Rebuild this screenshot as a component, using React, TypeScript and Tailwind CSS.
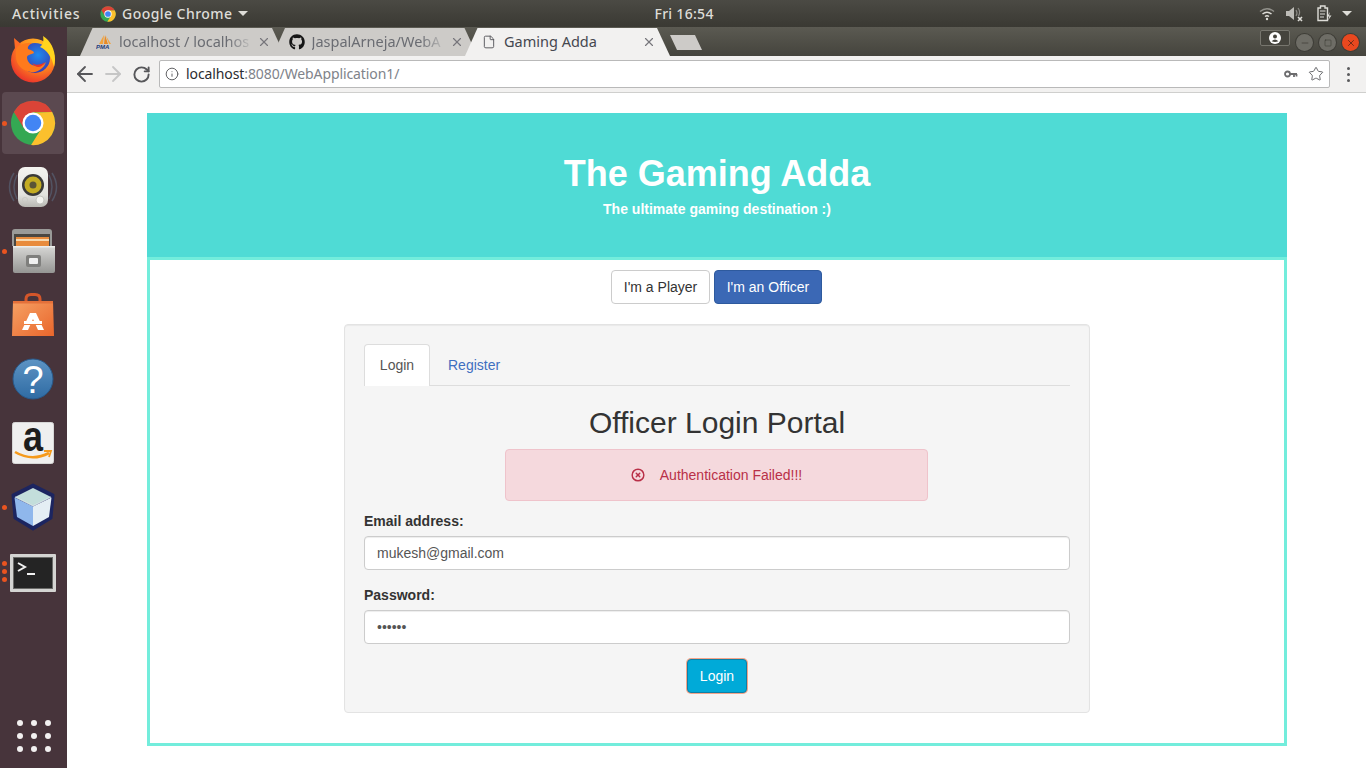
import { ArrowLeft, ArrowRight, RotateCw, Info, Star, X, File, CircleX, Minus, Square } from 'lucide-react';
import { FaGithub } from 'react-icons/fa';
import type { ReactNode } from 'react';

function ChromeIcon({ size }: { size: number }) {
  return (
    <svg width={size} height={size} viewBox="0 0 48 48">
      <circle cx="24" cy="24" r="23" fill="#34A853" />
      <path d="M44 12.5A23 23 0 0 1 22 47L33 29.5L24 13Z" fill="#FBC02D" />
      <path d="M4 12.5A23 23 0 0 1 44 12.5H24L14.5 29.5Z" fill="#DB4437" />
      <circle cx="24" cy="24" r="11" fill="#fff" />
      <circle cx="24" cy="24" r="8.6" fill="#4285F4" />
    </svg>
  );
}

function FirefoxIcon() {
  return (
    <svg width="46" height="48" viewBox="0 0 46 48">
      <defs>
        <radialGradient id="ffo" cx="0.65" cy="0.25" r="0.85">
          <stop offset="0" stopColor="#FFC928" />
          <stop offset="0.5" stopColor="#FF8A1E" />
          <stop offset="1" stopColor="#E8262D" />
        </radialGradient>
        <radialGradient id="ffb" cx="0.6" cy="0.4" r="0.7">
          <stop offset="0" stopColor="#1F8BEF" />
          <stop offset="1" stopColor="#3B2EA8" />
        </radialGradient>
      </defs>
      <circle cx="23" cy="25.5" r="22" fill="url(#ffo)" />
      <path d="M4 3L11 9L5 14Z" fill="#FF6A24" />
      <circle cx="25" cy="23" r="15" fill="url(#ffb)" />
      <path d="M33 1C43 7 47 20 44 32C42 22 37 15 30 12C33 10 34 6 33 1Z" fill="#FFD51E" />
      <path d="M6 14C10 9 16 7 22 8C19 10 17 12 18 14C21 15 24 16 24 18C21 20 18 19 17 22C17 27 21 31 27 31C32 31 34 29 36 27C34 33 28 38 21 37C12 36 6 29 6 22Z" fill="#FF7A1C" />
      <path d="M22 28C26 31 31 30 35 27C32 33 26 34 22 28Z" fill="#E8352B" />
    </svg>
  );
}

function SpeakerIcon() {
  return (
    <svg width="50" height="48" viewBox="0 0 50 48">
      <defs>
        <linearGradient id="spk" x1="0" y1="0" x2="0" y2="1">
          <stop offset="0" stopColor="#F4F4F0" />
          <stop offset="0.7" stopColor="#E2E2DE" />
          <stop offset="1" stopColor="#B8B8B2" />
        </linearGradient>
      </defs>
      <g fill="none" stroke="#6C9BBE" strokeWidth="1.5" opacity="0.3">
        <path d="M6 10Q-3 24 6 38" />
        <path d="M9 12Q3 24 9 36" />
        <path d="M44 10Q53 24 44 38" />
        <path d="M41 12Q47 24 41 36" />
      </g>
      <rect x="10" y="4" width="30" height="40" rx="7" fill="url(#spk)" />
      <circle cx="25" cy="22" r="11" fill="#3A3A38" />
      <circle cx="25" cy="22" r="8.5" fill="#C4AC22" />
      <circle cx="25" cy="22" r="3.5" fill="#5A5436" />
      <circle cx="32" cy="37" r="4" fill="#F4F4F0" stroke="#BDBDB8" strokeWidth="0.8" />
      <circle cx="17" cy="37" r="2.6" fill="none" stroke="#C8C8C2" strokeWidth="0.8" />
    </svg>
  );
}

function FilesIcon() {
  return (
    <svg width="46" height="46" viewBox="0 0 46 46">
      <defs>
        <linearGradient id="fil" x1="0" y1="0" x2="0" y2="1">
          <stop offset="0" stopColor="#D8D8D6" />
          <stop offset="1" stopColor="#959593" />
        </linearGradient>
      </defs>
      <path d="M2 4Q2 1 5 1H39Q42 1 42 4V18H2Z" fill="#9A9A98" />
      <rect x="4" y="6" width="36" height="12" fill="#4A4742" />
      <rect x="6" y="9" width="33" height="9" fill="#E88B3C" />
      <rect x="6" y="11" width="33" height="2" fill="#F7D9B0" />
      <path d="M3 18H45V43Q45 45 43 45H5Q3 45 3 43Z" fill="url(#fil)" />
      <rect x="3" y="18" width="42" height="1.5" fill="#EDEDEB" />
      <rect x="16" y="27" width="15" height="12" rx="2" fill="#7F7F7D" />
      <rect x="19" y="30" width="9" height="6" rx="1" fill="#F0F0F0" />
    </svg>
  );
}

function BagIcon() {
  return (
    <svg width="44" height="44" viewBox="0 0 44 44">
      <defs>
        <linearGradient id="bag" x1="0" y1="0" x2="1" y2="1">
          <stop offset="0" stopColor="#F6A265" />
          <stop offset="1" stopColor="#E9662C" />
        </linearGradient>
      </defs>
      <path d="M15 12V6Q15 1.5 20 1.5H24Q29 1.5 29 6V12" fill="none" stroke="#D4562A" strokeWidth="3" />
      <path d="M2 8H42L43 43H1Z" fill="url(#bag)" />
      <rect x="2" y="8" width="40" height="2.5" fill="#E4703A" />
      <path d="M19 20H25L33 37H27L22 26L17 37H11Z" fill="#fff" />
      <rect x="13" y="28" width="18" height="3" fill="#fff" />
      <rect x="13" y="31" width="18" height="1" fill="#EE7D3C" />
    </svg>
  );
}

function HelpIcon() {
  return (
    <svg width="42" height="42" viewBox="0 0 42 42">
      <defs>
        <linearGradient id="hlp" x1="0" y1="0" x2="0" y2="1">
          <stop offset="0" stopColor="#5D94C4" />
          <stop offset="1" stopColor="#2F6BA3" />
        </linearGradient>
      </defs>
      <circle cx="21" cy="21" r="20" fill="url(#hlp)" stroke="#28598A" />
      <text x="21" y="35" textAnchor="middle" fontFamily="Liberation Sans" fontSize="38" fill="#fff">?</text>
    </svg>
  );
}

function AmazonIcon() {
  return (
    <svg width="42" height="42" viewBox="0 0 42 42" className="overflow-visible">
      <rect x="0.5" y="0.5" width="41" height="41" rx="2" fill="#EFEFEF" stroke="#D6D6D6" />
      <text transform="translate(21 29) scale(1 1.2)" textAnchor="middle" fontFamily="Liberation Sans" fontWeight="700" fontSize="36" fill="#1d1d1d">a</text>
      <path d="M3 30Q20 40 37 31" fill="none" stroke="#F59A1C" strokeWidth="2.6" />
      <path d="M32 29L39 29L37 35" fill="none" stroke="#F59A1C" strokeWidth="1.8" />
    </svg>
  );
}

function CubeIcon() {
  return (
    <svg width="48" height="48" viewBox="0 0 48 48">
      <path d="M24 2L44 12L42 35L24 46L6 35L4 12Z" fill="#1C2560" stroke="#1C2560" strokeWidth="3" strokeLinejoin="round" />
      <path d="M24 5L42 14L24 23L6 14Z" fill="#C3DEDB" />
      <path d="M5.5 14.5L24 23.5V43L8 34Z" fill="#8FB7EC" />
      <path d="M42.5 14.5L24 23.5V43L40 34Z" fill="#E4EEF4" />
      <path d="M6 14L24 23L42 14" fill="none" stroke="#F4FAFA" strokeWidth="0.8" />
    </svg>
  );
}

function TerminalIcon() {
  return (
    <svg width="46" height="38" viewBox="0 0 46 38" className="mt-[3px]">
      <rect x="0" y="0" width="46" height="38" rx="1" fill="#D4D4D2" />
      <rect x="3" y="3" width="40" height="32" fill="#6A6A68" />
      <rect x="4" y="4" width="38" height="30" fill="#242424" />
      <path d="M8 9L15 13L8 17" fill="none" stroke="#f2f2f2" strokeWidth="2" />
      <rect x="17" y="19" width="8" height="2" fill="#f2f2f2" />
    </svg>
  );
}

function DockItem({ dots = 0, active = false, children }: { dots?: number; active?: boolean; children: ReactNode }) {
  return (
    <div className="relative h-[64px] w-[67px] shrink-0 py-[1px] pl-[2px] pr-[3px]">
      {dots > 0 && (
        <div className="absolute left-[2px] top-0 flex h-full flex-col justify-center gap-[3px]">
          {Array.from({ length: dots }).map((_, i) => (
            <span key={i} className="h-[5px] w-[5px] rounded-full bg-[#E95420]" />
          ))}
        </div>
      )}
      <div className={`flex h-[62px] w-[62px] items-center justify-center ${active ? 'rounded-[4px] bg-[#5B4950]' : ''}`}>
        {children}
      </div>
    </div>
  );
}

function Dock() {
  return (
    <aside className="flex w-[67px] shrink-0 flex-col items-center bg-[#47343B]">
      <DockItem><FirefoxIcon /></DockItem>
      <DockItem active dots={1}><ChromeIcon size={46} /></DockItem>
      <DockItem><SpeakerIcon /></DockItem>
      <DockItem dots={1}><FilesIcon /></DockItem>
      <DockItem><BagIcon /></DockItem>
      <DockItem><HelpIcon /></DockItem>
      <DockItem><AmazonIcon /></DockItem>
      <DockItem dots={1}><CubeIcon /></DockItem>
      <DockItem dots={3}><TerminalIcon /></DockItem>
      <div className="mt-auto mb-[16px] grid grid-cols-3 gap-x-[8px] gap-y-[7px]">
        {Array.from({ length: 9 }).map((_, i) => (
          <span key={i} className="h-[6px] w-[6px] rounded-full bg-[#F2F0F0]" />
        ))}
      </div>
    </aside>
  );
}

function TopBar() {
  return (
    <header className="flex h-[27px] shrink-0 items-center bg-gradient-to-b from-[#4B4A44] to-[#3A3933] pl-[12px] pr-[14px] font-['Noto_Sans',sans-serif] text-[14px] font-medium text-[#DEDDD8]">
      <span className="w-[88px] tracking-[0.8px]">Activities</span>
      <ChromeIcon size={16} />
      <span className="ml-[6px] tracking-[0.45px]">Google Chrome</span>
      <span className="ml-[6px] h-0 w-0 border-x-[5px] border-t-[5px] border-x-transparent border-t-[#DEDDD8]" />
      <span className="ml-[406px] tracking-[0.3px]">Fri 16:54</span>
      <div className="ml-auto flex items-center">
        <svg width="16" height="14" viewBox="0 0 16 14" fill="none" stroke="#DEDDD8" strokeWidth="1.5">
          <path d="M1 4.5Q8 -1 15 4.5" opacity="0.5" />
          <path d="M3.5 7Q8 3.5 12.5 7" />
          <path d="M6 9.5Q8 8 10 9.5" />
          <circle cx="8" cy="12" r="1.2" fill="#DEDDD8" stroke="none" />
        </svg>
        <svg width="18" height="16" viewBox="0 0 18 16" fill="none" className="ml-[11px]">
          <path d="M0 5H3L8 1V14L3 10H0Z" fill="#BDBCB7" />
          <path d="M10 4Q12 7 10 10M12 2Q15 6 12.5 10" stroke="#8B8A85" strokeWidth="1.2" />
          <path d="M12 11L16 15M16 11L12 15" stroke="#DEDDD8" strokeWidth="1.6" />
        </svg>
        <svg width="15" height="17" viewBox="0 0 15 17" fill="none" stroke="#DEDDD8" strokeWidth="1.4" className="ml-[13px]">
          <path d="M1 3H3.5V1H8V3H10.5V15.5H1Z" />
          <path d="M3 6H8.5M3 9H8M3 12H7" strokeWidth="1" />
          <path d="M13 7L10 11.5H12.5L11 15.5L14.5 10.5H12Z" fill="#DEDDD8" stroke="none" />
        </svg>
        <span className="ml-[10px] h-0 w-0 border-x-[5px] border-t-[5px] border-x-transparent border-t-[#DEDDD8]" />
      </div>
    </header>
  );
}

function Tab({ label, icon, active = false }: { label: string; icon: ReactNode; active?: boolean }) {
  return (
    <div
      className={`-mr-[12.5px] flex h-[28px] w-[205px] shrink-0 items-center pb-[1px] pl-[15px] pr-[14px] [clip-path:polygon(0_100%,12.5px_0,192px_0,205px_100%)] ${active ? 'relative z-10 bg-[#F2F1F0] text-[#45474F]' : 'bg-[#CDCBC8] text-[#6A6C72]'}`}
    >
      <span className="flex w-[18px] shrink-0 justify-center">{icon}</span>
      <span
        className={`ml-[6px] min-w-0 flex-1 whitespace-nowrap font-['Noto_Sans',sans-serif] text-[14.5px] ${active ? '' : '[mask-image:linear-gradient(to_right,#000_80%,transparent)]'}`}
      >
        {label}
      </span>
      <X size={14} strokeWidth={2} className="ml-[3px] shrink-0 text-[#77767B]" />
    </div>
  );
}

function PmaIcon() {
  return (
    <svg width="16" height="16" viewBox="0 0 16 16">
      <path d="M8 1L3 10H7Z" fill="#F2A33C" />
      <path d="M9 1L8 10H12Z" fill="#E98A22" />
      <path d="M10 2L13 10H15Z" fill="#F2A33C" />
      <text x="0" y="15" fontFamily="Liberation Sans" fontWeight="700" fontStyle="italic" fontSize="6" fill="#223A7A">PMA</text>
    </svg>
  );
}

function TabStrip() {
  return (
    <div className="flex h-[29px] shrink-0 items-end bg-gradient-to-b from-[#5B5A52] to-[#45443D] pl-[13px]">
      <Tab label="localhost / localhos" icon={<PmaIcon />} />
      <Tab label="JaspalArneja/WebA" icon={<FaGithub size={16} className="text-[#161616]" />} />
      <Tab active label="Gaming Adda" icon={<File size={14} strokeWidth={1.6} className="text-[#55555A]" />} />
      <div className="ml-[12.5px] mb-[6px] h-[15px] w-[32px] bg-[#CDCBC8] [clip-path:polygon(0_0,25px_0,32px_100%,7px_100%)]" />
      <div className="ml-auto flex items-end gap-[6px] pr-[7px]">
        <div className="mb-[10px] flex h-[16px] w-[30px] items-center justify-center rounded-[2px] border border-[#77766E] bg-[#45443D]">
          <svg width="12" height="12" viewBox="0 0 12 12">
            <circle cx="6" cy="6" r="6" fill="#fff" />
            <circle cx="6" cy="4.4" r="2" fill="#45443D" />
            <path d="M2.6 9.2Q6 6 9.4 9.2Q6 10.6 2.6 9.2Z" fill="#45443D" />
          </svg>
        </div>
        <span className="mb-[5px] flex h-[17px] w-[17px] items-center justify-center rounded-full bg-[#6E6D66] shadow-[0_0_0_1px_#3E3D37]">
          <Minus size={10} strokeWidth={1.5} className="text-[#36352F]" />
        </span>
        <span className="mb-[5px] flex h-[17px] w-[17px] items-center justify-center rounded-full bg-[#6E6D66] shadow-[0_0_0_1px_#3E3D37]">
          <Square size={8} strokeWidth={1.5} className="text-[#36352F]" />
        </span>
        <span className="mb-[5px] flex h-[17px] w-[17px] items-center justify-center rounded-full bg-[#E9481F] shadow-[0_0_0_1px_#3E3D37]">
          <X size={10} strokeWidth={1.8} className="text-[#4A2116]" />
        </span>
      </div>
    </div>
  );
}

function Toolbar() {
  return (
    <div className="flex h-[37px] shrink-0 items-center border-b border-[#CFCFCD] bg-[#F2F1F0] pl-[6px]">
      <ArrowLeft size={24} strokeWidth={1.8} className="text-[#57575A]" />
      <ArrowRight size={24} strokeWidth={1.8} className="ml-[4px] text-[#C6C6C6]" />
      <RotateCw size={19} strokeWidth={2.4} className="ml-[7px] text-[#57575A]" />
      <div className="ml-[8px] flex h-[28px] w-[1171px] items-center rounded-[2px] border border-[#B9B9B9] bg-white pl-[5px] pr-[5px]">
        <Info size={14} strokeWidth={1.7} className="text-[#5F6063]" />
        <span className="ml-[7px] pb-[2px] font-['Noto_Sans',sans-serif] text-[14px] tracking-[-0.1px] text-[#2B2C30]">
          localhost<span className="text-[#80838A]">:8080/WebApplication1/</span>
        </span>
        <svg width="14" height="8" viewBox="0 0 14 8" className="ml-auto" fill="none" stroke="#6C6C6E" strokeWidth="1.8">
          <circle cx="3.5" cy="4" r="2.5" />
          <path d="M6 4H13M10 4V7M12.5 4V6.5" />
        </svg>
        <Star size={16} strokeWidth={1.4} className="ml-[10px] text-[#5F6063]" />
      </div>
      <div className="ml-[17px] flex flex-col gap-[3px]">
        <span className="h-[3px] w-[3px] rounded-full bg-[#5A5A5C]" />
        <span className="h-[3px] w-[3px] rounded-full bg-[#5A5A5C]" />
        <span className="h-[3px] w-[3px] rounded-full bg-[#5A5A5C]" />
      </div>
    </div>
  );
}

function Field({ label, type, value }: { label: string; type: string; value: string }) {
  return (
    <div className="mb-[15px]">
      <label className="mb-[5px] block h-[20px] text-[14px] font-bold leading-[20px] text-[#333]">{label}</label>
      <input
        readOnly
        type={type}
        value={value}
        className="block h-[34px] w-full rounded-[4px] border border-[#CCCCCC] bg-white px-[12px] text-[14px] text-[#555] shadow-[inset_0_1px_1px_rgba(0,0,0,0.075)] outline-none"
      />
    </div>
  );
}

function Page() {
  return (
    <main className="flex-1 bg-white pl-[80px] pt-[20px] font-['Liberation_Sans',sans-serif]">
      <div className="w-[1140px]">
        <div className="flex h-[144px] flex-col items-center bg-[#4FDBD5] pt-[38px] text-white">
          <h1 className="text-[36px] font-bold leading-[46px]">The Gaming Adda</h1>
          <p className="mt-[2px] text-[14px] font-bold leading-[20px]">The ultimate gaming destination :)</p>
        </div>
        <div className="h-[489px] border-[3px] border-[#73EDDC] pt-[10px]">
          <div className="flex justify-center gap-[4px] pr-[1px] text-[14px] leading-[20px]">
            <button className="h-[34px] w-[99px] rounded-[4px] border border-[#CCCCCC] bg-white text-[#333]">I'm a Player</button>
            <button className="h-[34px] w-[108px] rounded-[4px] border border-[#2E5A9E] bg-[#3B68B5] text-white">I'm an Officer</button>
          </div>
          <section className="mx-auto mt-[20px] h-[389px] w-[746px] rounded-[4px] border border-[#E3E3E3] bg-[#F5F5F5] p-[19px] shadow-[inset_0_1px_1px_rgba(0,0,0,0.05)]">
            <div className="flex h-[42px] border-b border-[#DDDDDD] text-[14px]">
              <div className="flex h-[42px] w-[66px] items-center justify-center rounded-t-[4px] border border-b-0 border-[#DDDDDD] bg-white text-[#555]">Login</div>
              <div className="ml-[2px] flex h-[42px] items-center px-[16px] text-[#3F6FC0]">Register</div>
            </div>
            <h2 className="mt-[19px] text-center text-[30px] font-normal leading-[36px] text-[#333]">Officer Login Portal</h2>
            <div className="ml-[141px] mt-[8px] flex h-[52px] w-[423px] items-center justify-center rounded-[4px] border border-[#EFC3CB] bg-[#F5D9DD] text-[14px] text-[#B93048]">
              <CircleX size={14} strokeWidth={2.5} />
              <span className="ml-[15px]">Authentication Failed!!!</span>
            </div>
            <div className="mt-[10px]">
              <Field label="Email address:" type="email" value="mukesh@gmail.com" />
              <Field label="Password:" type="password" value="123456" />
            </div>
            <div className="flex justify-center">
              <button className="h-[34px] w-[60px] rounded-[4px] border border-[#0F7FA5] bg-[#00AAD8] text-[14px] text-white shadow-[0_0_0_1px_#F4A58A]">Login</button>
            </div>
          </section>
        </div>
      </div>
    </main>
  );
}

export default function App() {
  return (
    <div className="flex h-[768px] w-[1366px] flex-col overflow-hidden bg-white">
      <TopBar />
      <div className="flex min-h-0 flex-1">
        <Dock />
        <div className="flex min-w-0 flex-1 flex-col">
          <TabStrip />
          <Toolbar />
          <Page />
        </div>
      </div>
    </div>
  );
}
